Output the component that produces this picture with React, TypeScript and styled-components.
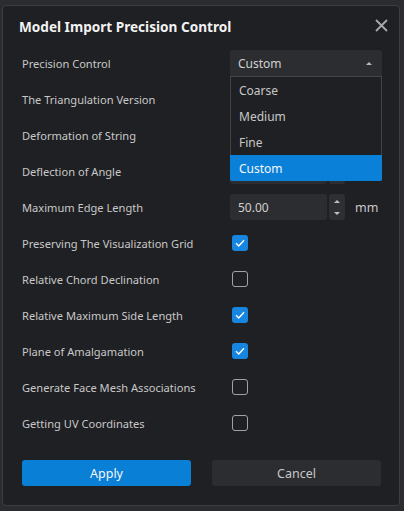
import React, { useState } from 'react';
import styled, { createGlobalStyle } from 'styled-components';

const GlobalStyle = createGlobalStyle`
    body {
        margin: 0;
        background: #2b2c2f;
        font-family: "Noto Sans", "Open Sans", sans-serif;
    }
`;

const Dialog = styled.div`
    box-sizing: border-box;
    width: 398px;
    height: 501px;
    margin: 5px 0 0 2px;
    background: #1f2023;
    border: 1px solid #3d3e41;
    border-radius: 4px;
    display: flex;
    flex-direction: column;
`;

const Header = styled.div`
    height: 39px;
    padding: 0 11px 0 16px;
    display: flex;
    align-items: center;
    justify-content: space-between;
`;

const Title = styled.h1`
    margin: 0;
    font-size: 13.6px;
    font-weight: 700;
    color: #f2f2f2;
    padding-top: 1px;
`;

const CloseButton = styled.button`
    width: 14px;
    height: 14px;
    padding: 0;
    border: none;
    background: none;
    display: flex;
    align-items: center;
    justify-content: center;
    cursor: pointer;
`;

const Body = styled.div`
    padding: 0 17px 0 19px;
    display: flex;
    flex-direction: column;
`;

const Row = styled.div`
    height: 36px;
    display: grid;
    grid-template-columns: 208px 1fr;
    align-items: center;
`;

const Label = styled.span`
    font-size: 11.1px;
    color: #c8c8c8;
`;

const SelectWrap = styled.div`
    position: relative;
    width: 152px;
`;

const SelectBox = styled.div`
    box-sizing: border-box;
    height: 26px;
    padding: 0 8px;
    background: #2c2d30;
    border-radius: 3px 3px 0 0;
    display: flex;
    align-items: center;
    justify-content: space-between;
    font-size: 12px;
    color: #d0d0d0;
`;

const Caret = styled.span`
    width: 0;
    height: 0;
    border-left: 3px solid transparent;
    border-right: 3px solid transparent;
    border-bottom: 3px solid #b8b8b8;
    margin-right: 2px;
`;

const OptionList = styled.ul`
    position: absolute;
    top: 26px;
    left: 0;
    right: 0;
    margin: 0;
    padding: 0;
    list-style: none;
    background: #1f2023;
    border: 1px solid #434447;
    border-bottom: none;
    z-index: 10;
`;

const Option = styled.li<{ $active?: boolean }>`
    height: 26px;
    padding: 0 9px;
    margin: 0 -1px;
    display: flex;
    align-items: center;
    font-size: 12px;
    color: ${p => (p.$active ? '#f4f8fc' : '#c8c8c8')};
    background: ${p => (p.$active ? '#0a80d8' : 'transparent')};
    border-radius: ${p => (p.$active ? '0 0 2px 2px' : '0')};
`;

const SpinGroup = styled.div`
    display: flex;
    align-items: center;
    gap: 2px;
`;

const NumberField = styled.div`
    box-sizing: border-box;
    width: 97px;
    height: 26px;
    padding: 0 8px;
    background: #2c2d30;
    border-radius: 3px;
    display: flex;
    align-items: center;
    font-size: 12px;
    color: #d0d0d0;
`;

const Spinner = styled.div`
    width: 16px;
    height: 26px;
    background: #2e2f32;
    border-radius: 3px;
    display: flex;
    flex-direction: column;
    align-items: center;
    justify-content: center;
    gap: 9px;
`;

const Arrow = styled.span<{ $down?: boolean }>`
    width: 0;
    height: 0;
    border-left: 3px solid transparent;
    border-right: 3px solid transparent;
    ${p => (p.$down ? 'border-top: 3px solid #c0c0c0;' : 'border-bottom: 3px solid #c0c0c0;')}
`;

const Unit = styled.span`
    margin-left: 8px;
    font-size: 12.5px;
    color: #c8c8c8;
`;

const Check = styled.button<{ $on: boolean }>`
    box-sizing: border-box;
    width: 16px;
    height: 16px;
    margin-left: 2px;
    padding: 0;
    border-radius: 3px;
    border: ${p => (p.$on ? 'none' : '1px solid #a2a2a2')};
    background: ${p => (p.$on ? '#1786e0' : 'transparent')};
    display: flex;
    align-items: center;
    justify-content: center;
    cursor: pointer;
`;

const Footer = styled.div`
    margin-top: 19px;
    padding: 0 18px 0 19px;
    display: flex;
    gap: 21px;
`;

const Button = styled.button<{ $primary?: boolean }>`
    flex: 1;
    height: 26px;
    border: none;
    border-radius: 3px;
    font-family: inherit;
    font-size: 12.5px;
    color: ${p => (p.$primary ? '#f4f8fc' : '#c8c8c8')};
    background: ${p => (p.$primary ? '#0a7fd6' : '#2c2d30')};
    cursor: pointer;
`;

// fields under the open list show no value, as in the picture
const SpinInput = ({ value, unit }: { value?: string; unit?: boolean }) => (
    <SpinGroup>
        <NumberField>{value}</NumberField>
        <Spinner>
            <Arrow />
            <Arrow $down />
        </Spinner>
        {unit && <Unit>mm</Unit>}
    </SpinGroup>
);

const checkRows = [
    { label: 'Preserving The Visualization Grid', on: true },
    { label: 'Relative Chord Declination', on: false },
    { label: 'Relative Maximum Side Length', on: true },
    { label: 'Plane of Amalgamation', on: true },
    { label: 'Generate Face Mesh Associations', on: false },
    { label: 'Getting UV Coordinates', on: false },
];

const options = ['Coarse', 'Medium', 'Fine', 'Custom'];

const App: React.FC = () => {
    const [checks, setChecks] = useState(checkRows.map(r => r.on));
    const [mode, setMode] = useState('Custom');

    return (
        <>
            <GlobalStyle />
            <Dialog>
                <Header>
                    <Title>Model Import Precision Control</Title>
                    <CloseButton>
                        <svg width="13" height="13" viewBox="0 0 13 13">
                            <path d="M1 1L12 12M12 1L1 12" stroke="#a8a8a8" strokeWidth="1.8" />
                        </svg>
                    </CloseButton>
                </Header>
                <Body>
                    <Row>
                        <Label>Precision Control</Label>
                        <SelectWrap>
                            <SelectBox>
                                {mode}
                                <Caret />
                            </SelectBox>
                            <OptionList>
                                {options.map(o => (
                                    <Option key={o} $active={o === mode} onClick={() => setMode(o)}>
                                        {o}
                                    </Option>
                                ))}
                            </OptionList>
                        </SelectWrap>
                    </Row>
                    <Row>
                        <Label>The Triangulation Version</Label>
                        <SpinInput />
                    </Row>
                    <Row>
                        <Label>Deformation of String</Label>
                        <SpinInput />
                    </Row>
                    <Row>
                        <Label>Deflection of Angle</Label>
                        <SpinInput />
                    </Row>
                    <Row>
                        <Label>Maximum Edge Length</Label>
                        <SpinInput value="50.00" unit />
                    </Row>
                    {checkRows.map((r, i) => (
                        <Row key={r.label}>
                            <Label>{r.label}</Label>
                            <Check
                                $on={checks[i]}
                                onClick={() => setChecks(c => c.map((v, j) => (j === i ? !v : v)))}
                            >
                                {checks[i] && (
                                    <svg width="10" height="8" viewBox="0 0 10 8">
                                        <path d="M1 4.2L3.8 7L9 1.2" stroke="#fff" strokeWidth="1.4" fill="none" />
                                    </svg>
                                )}
                            </Check>
                        </Row>
                    ))}
                </Body>
                <Footer>
                    <Button $primary>Apply</Button>
                    <Button>Cancel</Button>
                </Footer>
            </Dialog>
        </>
    );
};

export default App;
